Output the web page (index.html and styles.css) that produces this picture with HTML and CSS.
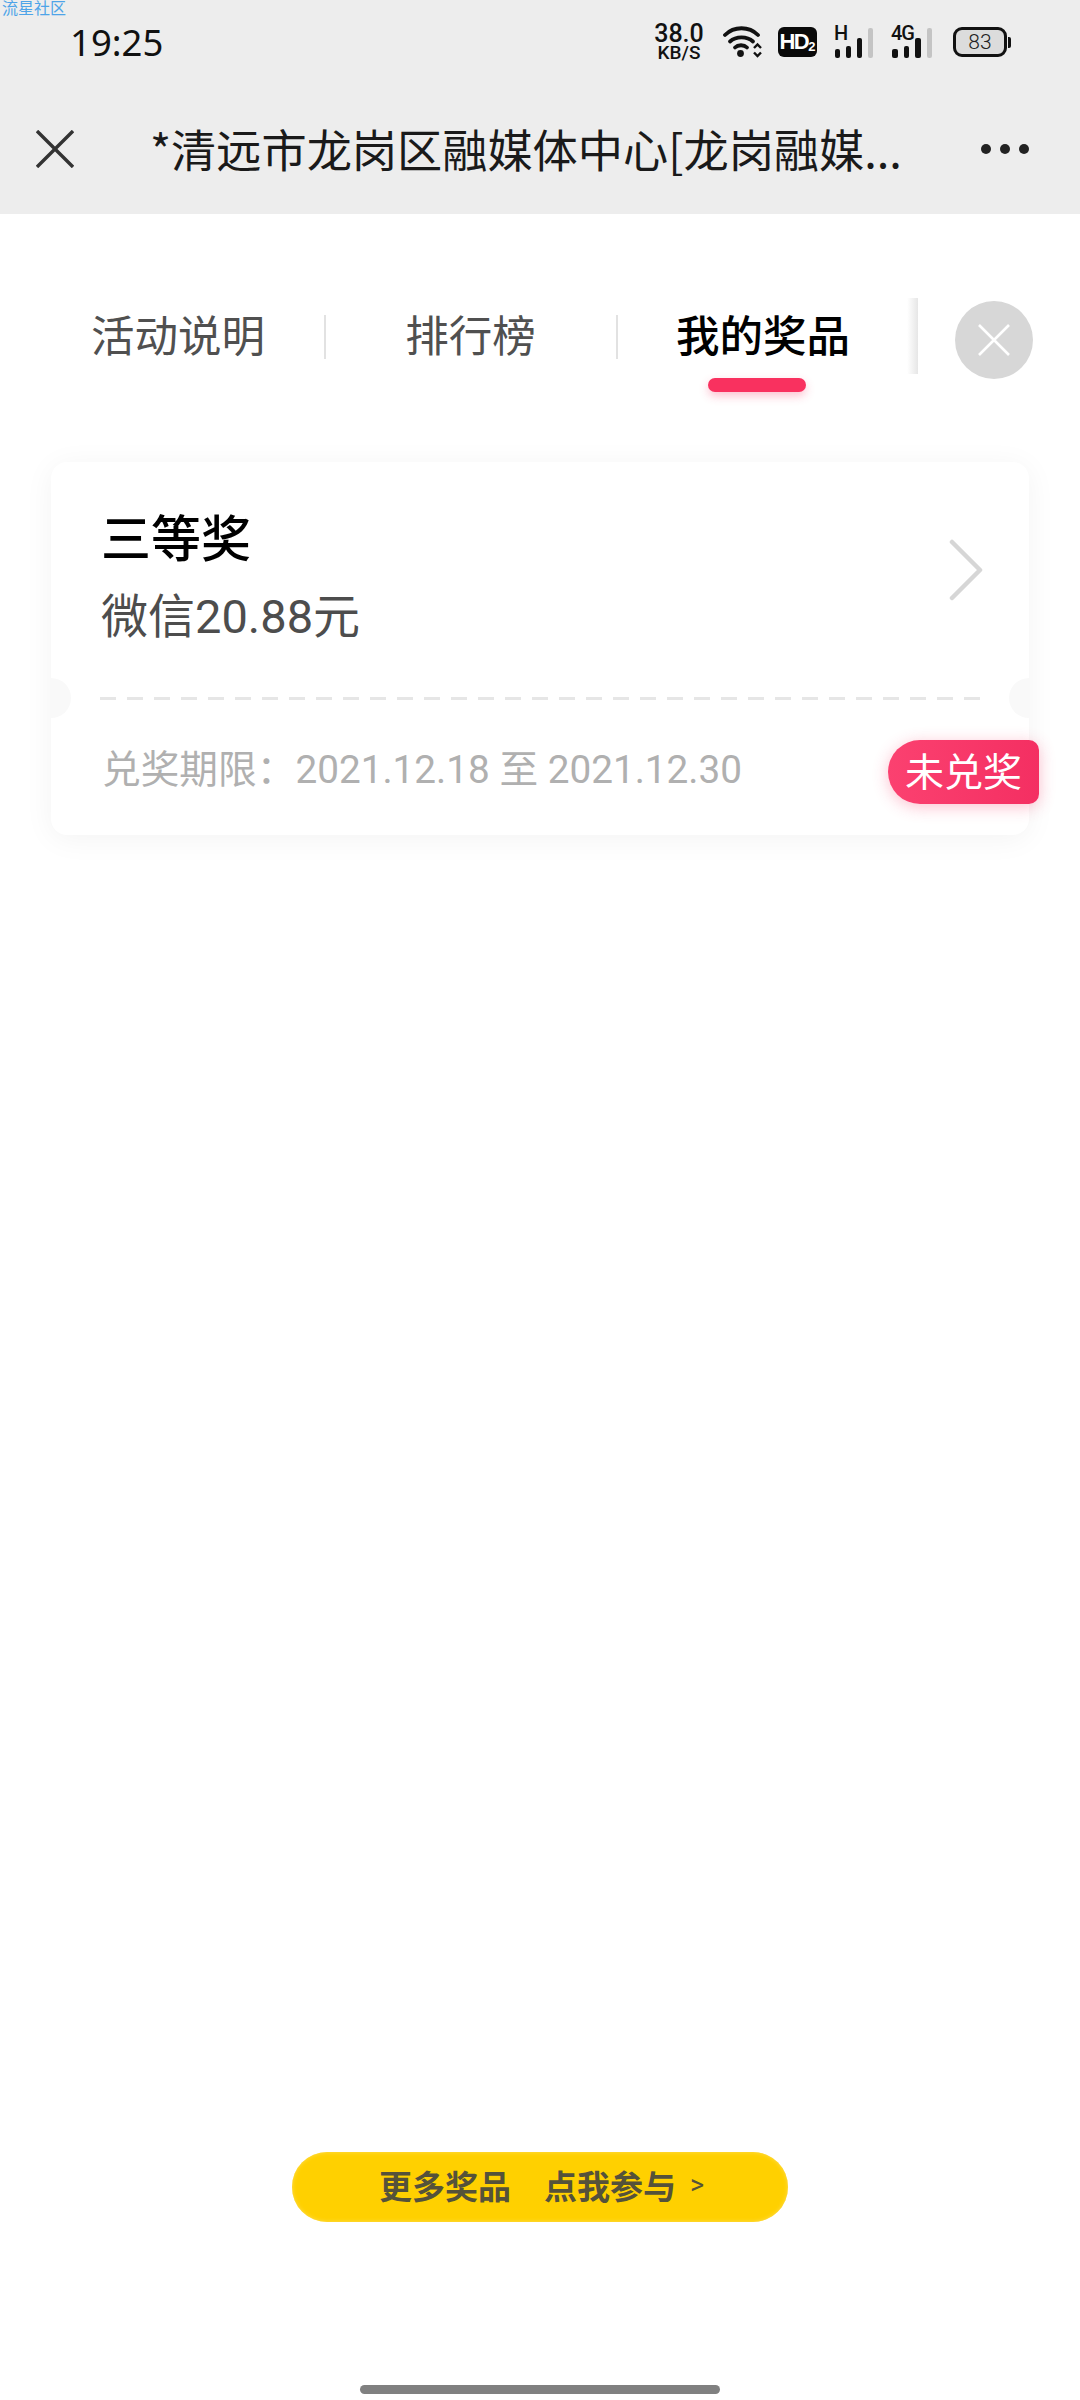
FILE: index.html
```html
<!DOCTYPE html>
<html lang="zh-CN">
<head>
<meta charset="utf-8">
<title>我的奖品</title>
<link rel="stylesheet" href="styles.css">
</head>
<body>
<div class="screen">
  <header class="topbar">
    <div class="watermark">流星社区</div>
    <div class="status">
      <span class="time">19:25</span>
      <div class="status-icons">
        <div class="speed"><span class="speed-num">38.0</span><span class="speed-unit">KB/S</span></div>
        <svg class="wifi" width="40" height="32" viewBox="0 0 40 32">
          <path d="M2 9C11 0 26 0 35 9" fill="none" stroke="#111" stroke-width="3.8" stroke-linecap="round"/>
          <path d="M7 15.5C13 10 24 10 30 15.5" fill="none" stroke="#111" stroke-width="3.8" stroke-linecap="round"/>
          <path d="M12 21.5C15 18.5 21 18.5 24 21.5" fill="none" stroke="#111" stroke-width="3.8" stroke-linecap="round"/>
          <circle cx="17.5" cy="27.5" r="3.4" fill="#111"/>
          <path d="M31 22l3.5-3.5L38 22M31 26.5l3.5 3.5 3.5-3.5" fill="none" stroke="#111" stroke-width="2.4"/>
        </svg>
        <div class="hd">HD<span class="hd-sub">2</span></div>
        <div class="signal signal-h">
          <span class="net">H</span>
          <i class="bar b1"></i><i class="bar b2"></i><i class="bar b3"></i><i class="bar b4"></i>
        </div>
        <div class="signal signal-4g">
          <span class="net">4G</span>
          <i class="bar b1"></i><i class="bar b2"></i><i class="bar b3"></i><i class="bar b4"></i>
        </div>
        <div class="battery"><div class="battery-body">83</div><div class="battery-tip"></div></div>
      </div>
    </div>
    <nav class="navbar">
      <svg class="nav-close" width="38" height="38" viewBox="0 0 38 38">
        <path d="M1 1L37 37M37 1L1 37" stroke="#333" stroke-width="3.4" fill="none"/>
      </svg>
      <div class="nav-title">*清远市龙岗区融媒体中心[龙岗融媒...</div>
      <div class="nav-more"><i></i><i></i><i></i></div>
    </nav>
  </header>

  <main class="page">
    <div class="tabs">
      <div class="tab tab-1">活动说明</div>
      <div class="tab-sep sep-1"></div>
      <div class="tab tab-2">排行榜</div>
      <div class="tab-sep sep-2"></div>
      <div class="tab tab-3">我的奖品</div>
      <div class="tab-end"></div>
      <div class="tab-close">
        <svg width="32" height="32" viewBox="0 0 32 32"><path d="M1 1L31 31M31 1L1 31" stroke="#fff" stroke-width="2.6" fill="none"/></svg>
      </div>
    </div>

    <section class="ticket">
      <div class="ticket-top">
        <div class="ticket-info">
          <div class="prize-level">三等奖</div>
          <div class="prize-name">微信20.88元</div>
        </div>
        <svg class="chevron" width="34" height="62" viewBox="0 0 34 62"><path d="M3 3L31 31L3 59" fill="none" stroke="#d6d6d6" stroke-width="4.5" stroke-linecap="round" stroke-linejoin="round"/></svg>
      </div>
      <div class="ticket-cut"></div>
      <div class="ticket-bottom">
        <div class="period">兑奖期限：2021.12.18 至 2021.12.30</div>
      </div>
      <div class="badge">未兑奖</div>
    </section>
  </main>

  <div class="cta-wrap"><div class="cta"><span class="cta-text">更多奖品　点我参与</span><span class="cta-arrow">&gt;</span></div></div>
  <div class="home-bar"></div>
</div>
</body>
</html>
```

FILE: styles.css
```css
* { box-sizing: border-box; }
html, body { margin: 0; padding: 0; background: #fff; }
body { font-family: Roboto, "Noto Sans CJK SC", sans-serif; }
.screen { width: 1080px; height: 2400px; overflow: hidden; display: flex; flex-direction: column; background: #fff; position: relative; }

.topbar { height: 214px; background: #ededed; flex: none; display: flex; flex-direction: column; position: relative; }
.watermark { position: absolute; left: 2px; top: 0; font-size: 16px; line-height: 18px; color: #4ea4e8; }
.status { height: 84px; padding: 0 69px 0 70px; display: flex; align-items: center; justify-content: space-between; }
.time { font-size: 36.5px; color: #111; line-height: 84px; font-family: "Noto Sans", sans-serif; }
.status-icons { display: flex; align-items: center; height: 84px; }
.speed { width: 50px; margin-right: 19px; display: flex; flex-direction: column; align-items: center; color: #111; font-weight: 500; }
.speed-num { font-size: 25px; line-height: 21px; }
.speed-unit { font-size: 19px; line-height: 17px; }
.wifi { margin-right: 15px; }
.hd { width: 39px; height: 30px; background: #0a0a0a; border-radius: 6px; color: #fff; font-size: 22px; font-weight: 700; line-height: 30px; text-align: center; letter-spacing: -1.5px; margin-right: 17px; font-family: "Liberation Sans", sans-serif; }
.hd-sub { font-size: 13px; vertical-align: -2px; letter-spacing: 0; }
.signal { position: relative; height: 32px; display: flex; align-items: flex-end; gap: 6px; padding-left: 1px; margin-right: 18px; }
.signal-h { width: 39px; }
.signal-4g { width: 44px; }
.net { position: absolute; left: 0; top: -3px; font-size: 20px; line-height: 20px; font-weight: 500; color: #111; letter-spacing: -1px; }
.bar { display: block; width: 5.5px; background: #111; border-radius: 2px; }
.b1 { height: 9px; }
.b2 { height: 12px; }
.b3 { height: 20px; }
.b4 { height: 30px; background: #c4c4c4; }
.battery { display: flex; align-items: center; gap: 1px; }
.battery-body { width: 54px; height: 30px; border: 3px solid #111; border-radius: 9px; background: #dcdcdc; color: #222; font-size: 21px; line-height: 24px; text-align: center; font-weight: 300; }
.battery-tip { width: 3px; height: 11px; background: #111; border-radius: 0 2px 2px 0; }

.navbar { flex: 1; display: flex; align-items: center; padding: 0 51px 0 36px; }
.nav-close { flex: none; margin-right: 76px; }
.nav-title { font-size: 45.2px; line-height: 60px; color: #1a1a1a; white-space: nowrap; font-family: "Noto Sans CJK SC", sans-serif; }
.nav-more { margin-left: auto; display: flex; gap: 9px; }
.nav-more i { display: block; width: 10px; height: 10px; border-radius: 50%; background: #222; }

.page { flex: 1; padding: 0 51px; }
.tabs { height: 248px; display: flex; align-items: flex-start; position: relative; margin: 0 -51px; padding: 96px 0 0 91px; }
.tab { font-size: 43.5px; line-height: 48px; color: #505050; font-family: "Noto Sans CJK SC", sans-serif; text-align: center; flex: none; white-space: nowrap; }
.tab-1 { width: 174px; }
.tab-2 { width: 131px; margin-left: 79px; }
.tab-3 { width: 174px; margin-left: 58px; position: relative; color: #000; font-weight: 500; }
.tab-3::after { content: ""; position: absolute; left: 32px; top: 68px; width: 98px; height: 14px; border-radius: 7px; background: #f9315f; box-shadow: 0 4px 10px rgba(249, 49, 95, .3); }
.tab-sep { width: 2px; height: 44px; background: #e2e2e2; flex: none; margin-top: 5px; }
.sep-1 { margin-left: 59px; }
.sep-2 { margin-left: 80px; }
.tab-end { width: 68px; height: 76px; margin-top: -12px; flex: none; background: linear-gradient(to right, #fff 0%, #fff 84%, #e6e6e6 100%); }
.tab-close { position: absolute; left: 955px; top: 87px; width: 78px; height: 78px; border-radius: 50%; background: #d7d7d7; display: flex; align-items: center; justify-content: center; }

.ticket { position: relative; width: 978px; height: 373px; border-radius: 16px; background: #fff; box-shadow: 0 4px 30px rgba(0, 0, 0, .05); display: flex; flex-direction: column; }
.ticket-top { height: 235px; padding: 41px 46px 0 50px; display: flex; align-items: flex-start; justify-content: space-between; }
.ticket-info { display: flex; flex-direction: column; }
.prize-level { font-size: 50px; line-height: 64px; color: #000; font-weight: 500; font-family: "Noto Sans CJK SC", sans-serif; }
.prize-name { font-size: 47px; line-height: 62px; margin-top: 19px; color: #4d4d4d; }
.chevron { margin-top: 36px; }
.ticket-cut { height: 3px; margin: 0 49px; position: relative; background-image: linear-gradient(to right, #e6e6e6 0, #e6e6e6 16px, transparent 16px); background-size: 27px 3px; background-repeat: repeat-x; }
.ticket-cut::before, .ticket-cut::after { content: ""; position: absolute; top: -19px; width: 20px; height: 40px; background: #f9f9f9; }
.ticket-cut::before { left: -49px; border-radius: 0 20px 20px 0; }
.ticket-cut::after { right: -49px; border-radius: 20px 0 0 20px; }
.ticket-bottom { flex: 1; padding: 43px 0 0 51px; }
.period { font-size: 38.7px; line-height: 54px; color: #b0b0b0; white-space: nowrap; }
.badge { position: absolute; left: 837px; top: 278px; width: 151px; height: 64px; border-radius: 32px 10px 10px 32px; background: linear-gradient(to right, #fb4170, #f42f62); box-shadow: 0 3px 16px rgba(249, 49, 95, .3); color: #fff; font-size: 39px; line-height: 58px; text-align: center; font-family: "Noto Sans CJK SC", sans-serif; }

.cta-wrap { position: absolute; left: 0; top: 2152px; width: 1080px; display: flex; justify-content: center; }
.cta { width: 496px; height: 70px; border-radius: 35px; background: #ffd000; box-shadow: inset 0 0 4px #ffdd55; display: flex; align-items: center; justify-content: center; gap: 14px; color: #55523a; padding: 0 0 5px 3px; }
.cta-text { font-size: 33px; font-weight: 700; line-height: 40px; font-family: "Noto Sans CJK SC", sans-serif; }
.cta-arrow { font-size: 27px; line-height: 40px; font-weight: 400; }
.home-bar { position: absolute; left: 360px; top: 2385px; width: 360px; height: 9px; border-radius: 5px; background: #808080; }
```
